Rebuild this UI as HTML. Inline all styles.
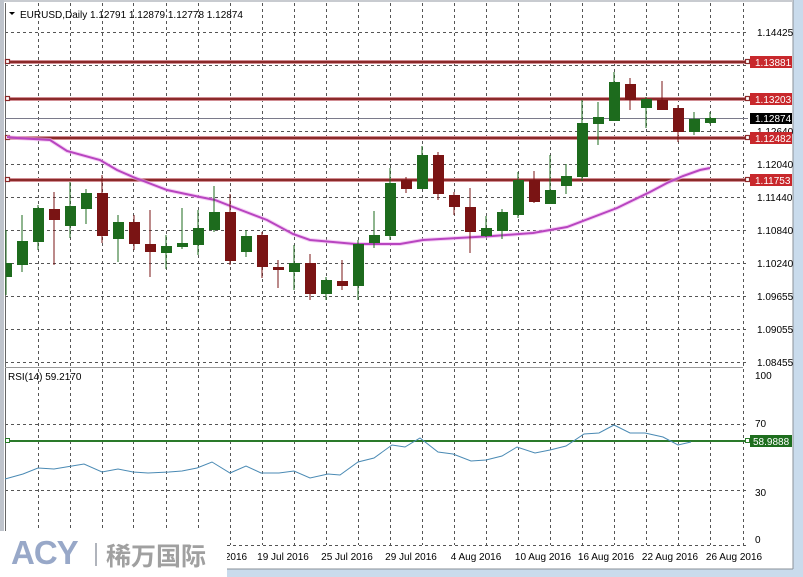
<!DOCTYPE html>
<html><head><meta charset="utf-8">
<style>
html,body{margin:0;padding:0;background:#fff;}
body{width:803px;height:577px;overflow:hidden;position:relative;}
svg{position:absolute;left:0;top:0;}
text{font-family:"Liberation Sans",sans-serif;font-size:10px;fill:#000;}
.logo{position:absolute;left:0;top:531px;width:227px;height:46px;background:#fff;}
.acy{position:absolute;left:11px;top:3px;font:900 33px "Liberation Sans",sans-serif;color:#98a8c8;letter-spacing:-1px;}
.bar{position:absolute;left:95px;top:12px;width:2px;height:23px;background:#b0b4bc;}
.cn{position:absolute;left:106px;top:6px;font:bold 25px "Liberation Sans","Noto Sans CJK SC",sans-serif;color:#a0a0a0;}
</style></head><body>
<svg width="803" height="577" viewBox="0 0 803 577" xmlns="http://www.w3.org/2000/svg">
<rect x="0" y="0" width="803" height="577" fill="#fff"/>
<rect x="0" y="0" width="4" height="577" fill="#bfc4cc"/>
<rect x="793" y="0" width="10" height="577" fill="#c9dbec"/>
<line x1="793" y1="0" x2="793" y2="570" stroke="#8a9099"/>
<rect x="0" y="569" width="803" height="8" fill="#c9dbec"/>
<line x1="0" y1="569" x2="793" y2="569" stroke="#8a9099"/>
<rect x="4" y="0" width="789" height="2" fill="#c8cbd0"/>
<g stroke="#555" stroke-width="1" stroke-dasharray="3,3" fill="none">
<path d="M38.5 3V545M70.5 3V545M102.5 3V545M133.5 3V545M166.5 3V545M198.5 3V545M230.5 3V545M262.5 3V545M294.5 3V545M326.5 3V545M358.5 3V545M390.5 3V545M422.5 3V545M454.5 3V545M486.5 3V545M518.5 3V545M550.5 3V545M582.5 3V545M614.5 3V545M646.5 3V545M678.5 3V545M710.5 3V545M743.5 3V545"/>
<path d="M5 32.5H748M5 65.5H748M5 98.5H748M5 131.5H748M5 164.5H748M5 197.5H748M5 230.5H748M5 263.5H748M5 296.5H748M5 329.5H748M5 362.5H748M5 424.5H748M5 490.5H748M5 545.5H748"/>
</g>
<line x1="5.5" y1="3" x2="5.5" y2="545" stroke="#666"/>
<line x1="5" y1="367.5" x2="743" y2="367.5" stroke="#999"/>
<line x1="5" y1="118.5" x2="748" y2="118.5" stroke="#7a7a8a"/>
<path d="M8 62H746M8 99H746M8 138H746M8 180H746" stroke="#e8b0b8" stroke-width="4" fill="none"/>
<path d="M8 62H746M8 99H746M8 138H746M8 180H746" stroke="#8b2a2a" stroke-width="2.5" fill="none"/>
<g fill="#fff" stroke="#8b2a2a" stroke-width="1.2">
<rect x="5.5" y="59.5" width="4" height="4"/><rect x="5.5" y="96.5" width="4" height="4"/><rect x="5.5" y="135.5" width="4" height="4"/><rect x="5.5" y="177.5" width="4" height="4"/>
<rect x="745.5" y="59.5" width="4" height="4"/><rect x="745.5" y="96.5" width="4" height="4"/><rect x="745.5" y="135.5" width="4" height="4"/><rect x="745.5" y="177.5" width="4" height="4"/>
</g>
<polyline fill="none" stroke="#f0b0f0" stroke-width="4" opacity="0.6" points="7,137 17,138 50,140 67,151 100,160 117,170 133,177 167,190 200,197 215,200 233,207 267,220 293,234 310,240 333,242 355,244 390,244 400,244 423,240 493,236 533,233 567,227 617,208 650,192 667,183 683,176 700,170 710,168"/>
<polyline fill="none" stroke="#b845c0" stroke-width="2" points="7,137 17,138 50,140 67,151 100,160 117,170 133,177 167,190 200,197 215,200 233,207 267,220 293,234 310,240 333,242 355,244 390,244 400,244 423,240 493,236 533,233 567,227 617,208 650,192 667,183 683,176 700,170 710,168"/>
<g stroke="#1d6b1d" fill="none">
<path d="M6 230V295M22 215V272M38 205V250M70 182V238M86 189V224M118 215V262M166 235V269M182 208V249M198 210V255M214 186V232M246 230V257M294 245V290M326 277V300M358 240V300M374 211V248M390 168V240M422 146V189M486 216V237M502 209V239M518 172V218M550 155V204M566 164V194M582 100V181M598 102V145M614 72V121M646 97V128M694 112V135M710 112V124"/>
</g>
<g fill="#1d6b1d">
<rect x="6" y="263" width="6" height="14"/>
<rect x="17" y="241" width="11" height="24"/>
<rect x="33" y="208" width="11" height="34"/>
<rect x="65" y="206" width="11" height="20"/>
<rect x="81" y="193" width="11" height="16"/>
<rect x="113" y="222" width="11" height="17"/>
<rect x="161" y="246" width="11" height="7"/>
<rect x="177" y="243" width="11" height="4"/>
<rect x="193" y="228" width="11" height="17"/>
<rect x="209" y="212" width="11" height="18"/>
<rect x="241" y="236" width="11" height="16"/>
<rect x="289" y="263" width="11" height="9"/>
<rect x="321" y="280" width="11" height="14"/>
<rect x="353" y="244" width="11" height="42"/>
<rect x="369" y="235" width="11" height="8"/>
<rect x="385" y="183" width="11" height="53"/>
<rect x="417" y="155" width="11" height="34"/>
<rect x="481" y="228" width="11" height="8"/>
<rect x="497" y="212" width="11" height="19"/>
<rect x="513" y="180" width="11" height="35"/>
<rect x="545" y="190" width="11" height="14"/>
<rect x="561" y="176" width="11" height="10"/>
<rect x="577" y="123" width="11" height="54"/>
<rect x="593" y="117" width="11" height="7"/>
<rect x="609" y="82" width="11" height="39"/>
<rect x="641" y="99" width="11" height="9"/>
<rect x="689" y="119" width="11" height="13"/>
<rect x="705" y="118" width="11" height="5"/>
</g>
<g stroke="#7a1414">
<path d="M54 192V265M102 175V243M134 215V250M150 210V277M230 194V265M262 232V278M278 260V288M310 254V300M342 260V290M406 177V193M438 152V200M454 192V215M470 188V253M534 171V203M630 78V110M662 81V110M678 105V142"/>
</g>
<g fill="#7a1414">
<rect x="49" y="209" width="11" height="11"/>
<rect x="97" y="193" width="11" height="43"/>
<rect x="129" y="222" width="11" height="22"/>
<rect x="145" y="244" width="11" height="8"/>
<rect x="225" y="212" width="11" height="49"/>
<rect x="257" y="235" width="11" height="32"/>
<rect x="273" y="267" width="11" height="3"/>
<rect x="305" y="263" width="11" height="31"/>
<rect x="337" y="281" width="11" height="5"/>
<rect x="401" y="180" width="11" height="9"/>
<rect x="433" y="155" width="11" height="39"/>
<rect x="449" y="195" width="11" height="12"/>
<rect x="465" y="207" width="11" height="25"/>
<rect x="529" y="180" width="11" height="22"/>
<rect x="625" y="84" width="11" height="16"/>
<rect x="657" y="100" width="11" height="10"/>
<rect x="673" y="108" width="11" height="24"/>
</g>
<line x1="8" y1="441" x2="746" y2="441" stroke="#2a7a2a" stroke-width="2"/>
<rect x="5.5" y="438.5" width="4" height="4" fill="#fff" stroke="#2a7a2a"/>
<rect x="745.5" y="438.5" width="4" height="4" fill="#fff" stroke="#2a7a2a"/>
<polyline fill="none" stroke="#4a8ab4" stroke-width="1" points="5,479 23,474 38,468 54,469 72,466 84,464 102,472 118,469 133,472 148,473 169,472 182,471 197,468 212,462 230,473 246,466 261,473 279,473 294,471 310,478 328,474 340,475 358,462 374,458 392,445 405,447 420,438 438,452 453,454 471,461 486,460 502,456 517,447 535,453 550,450 566,446 584,434 599,433 614,425 630,433 645,433 663,437 678,445 691,442"/>
<text x="757" y="36">1.14425</text>
<text x="757" y="135">1.12640</text>
<text x="757" y="168">1.12040</text>
<text x="757" y="201">1.11440</text>
<text x="757" y="234">1.10840</text>
<text x="757" y="267">1.10240</text>
<text x="757" y="300">1.09655</text>
<text x="757" y="333">1.09055</text>
<text x="757" y="366">1.08455</text>
<text x="755" y="379">100</text>
<text x="755" y="427">70</text>
<text x="755" y="496">30</text>
<text x="755" y="543">0</text>
<rect x="750" y="56" width="42" height="12" fill="#c8282c"/><text x="755" y="66" style="fill:#fff">1.13881</text>
<rect x="750" y="93" width="42" height="12" fill="#c8282c"/><text x="755" y="103" style="fill:#fff">1.13203</text>
<rect x="750" y="113" width="42" height="11" fill="#000"/><text x="755" y="122" style="fill:#fff">1.12874</text>
<rect x="750" y="132" width="42" height="12" fill="#c8282c"/><text x="755" y="142" style="fill:#fff">1.12482</text>
<rect x="750" y="174" width="42" height="12" fill="#c8282c"/><text x="755" y="184" style="fill:#fff">1.11753</text>
<rect x="750" y="435" width="42" height="12" fill="#1e6e1e"/><text x="753" y="445" style="fill:#fff">58.9888</text>
<path d="M9 12H15L12 15Z" fill="#000"/>
<text x="20" y="18">EURUSD,Daily  1.12791 1.12879 1.12778 1.12874</text>
<text x="8" y="380">RSI(14) 59.2170</text>
<g text-anchor="middle">
<text x="236" y="560">2016</text>
<text x="283" y="560">19 Jul 2016</text>
<text x="347" y="560">25 Jul 2016</text>
<text x="411" y="560">29 Jul 2016</text>
<text x="476" y="560">4 Aug 2016</text>
<text x="543" y="560">10 Aug 2016</text>
<text x="606" y="560">16 Aug 2016</text>
<text x="670" y="560">22 Aug 2016</text>
<text x="734" y="560">26 Aug 2016</text>
</g>
</svg>
<div class="logo"><div class="acy">ACY</div><div class="bar"></div><div class="cn">稀万国际</div></div>
</body></html>
